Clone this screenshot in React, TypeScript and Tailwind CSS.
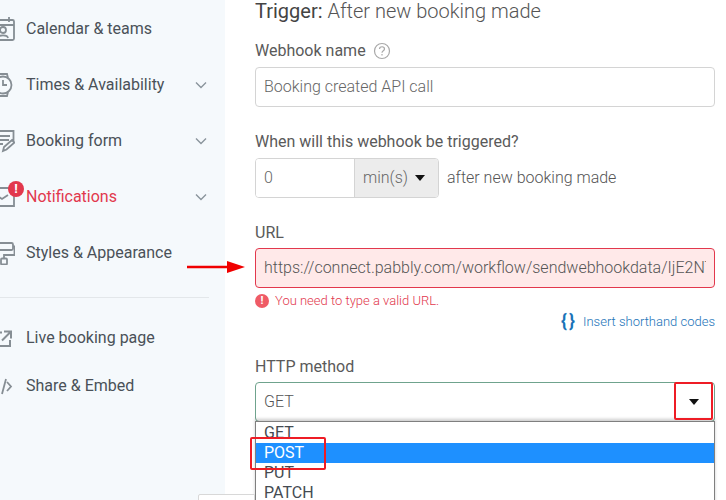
import React from "react";

const Chevron = () => (
  <svg width="12" height="8" viewBox="0 0 12 8" fill="none" stroke="#8a949c" strokeWidth="1.4" className="ml-auto mr-[18px]">
    <path d="M1 1.5l5 5 5-5" />
  </svg>
);

const ico = { width: 24, height: 24, viewBox: "0 0 24 24", fill: "none", stroke: "#868e94", strokeWidth: 1.8 };

const Icons: Record<string, React.ReactNode> = {
  calendar: (
    <svg {...ico}>
      <rect x="1" y="3" width="22" height="20" rx="1.5" />
      <path d="M1 8h22M18 0v5" />
      <circle cx="12" cy="13" r="3" />
      <path d="M7 21c.5-3.500 9.500-3.500 10 0" />
    </svg>
  ),
  watch: (
    <svg {...ico}>
      <circle cx="12" cy="12" r="8.500" />
      <path d="M12 7v5h4M7 5l1-4h8l1 4M7 19l1 4h8l1-4" />
    </svg>
  ),
  form: (
    <svg {...ico}>
      <path d="M4 4V2h18.500v10M8 7h11M5 11h13M4 15h8M4 19h5M12 22l1-4 8-7 2.500 2.500-8 7z" />
    </svg>
  ),
  mail: (
    <svg {...ico}>
      <path d="M1 3h22v18H1zM5 10l6 4 6-4" />
    </svg>
  ),
  roller: (
    <svg {...ico}>
      <rect x="1" y="2" width="21" height="7" rx="1.500" />
      <path d="M22 5.500h1.500V14H13v3.500" />
      <rect x="10" y="17.500" width="6" height="6" rx="1" />
    </svg>
  ),
  link: (
    <svg {...ico} strokeWidth={2}>
      <path d="M11 6.500H4V20h15v-6M13 5.500h7v7M20 5.500L11 14.500" />
    </svg>
  ),
  code: (
    <svg {...ico}>
      <path d="M15 5l-4 15M16 8l4 4.500-4 4.500" />
    </svg>
  ),
};

function NavItem({ icon, label, chevron, h = "h-14", alert }: { icon: string; label: string; chevron?: boolean; h?: string; alert?: boolean }) {
  return (
    <div className={`flex items-center ${h}`}>
      <div className="relative ml-[-9px] w-6 h-6 shrink-0">
        {Icons[icon]}
        {alert && (
          <span className="absolute left-[17px] top-[-4px] w-4 h-4 rounded-full bg-[#e2384d] text-white text-[13px] font-bold leading-4 text-center">!</span>
        )}
      </div>
      <span className={`ml-[11px] text-[16px] ${alert ? "text-[#e2384d]" : "text-[#4a5158]"}`}>{label}</span>
      {chevron && <Chevron />}
    </div>
  );
}

const Field = "w-full h-10 rounded border border-[#d4d4d4] bg-white flex items-center px-[8px] text-[16px] font-light text-[#666]";

export default function App() {
  return (
    <div className="relative w-[726px] h-[500px] overflow-hidden bg-white flex font-['Roboto',sans-serif]">
      <aside className="w-[225px] shrink-0 bg-[#f5f9fc] pt-[1px]">
        <NavItem icon="calendar" label="Calendar & teams" />
        <NavItem icon="watch" label="Times & Availability" chevron />
        <NavItem icon="form" label="Booking form" chevron />
        <NavItem icon="mail" label="Notifications" chevron alert />
        <NavItem icon="roller" label="Styles & Appearance" />
        <div className="w-[209px] border-t border-[#e3e7ea] mt-[16px] mb-[16px]" />
        <NavItem icon="link" label="Live booking page" h="h-12" />
        <NavItem icon="code" label="Share & Embed" h="h-12" />
      </aside>

      <main className="flex-1 pl-[30px] pr-[11px]">
        <h2 className="text-[20px] leading-6 mt-[-1px] font-light text-[#555]">
          <span className="font-normal text-[#444]">Trigger:</span> After new booking made
        </h2>

        <label className="mt-[16px] flex items-center h-6 text-[16px] text-[#5a5a5a]">
          Webhook name
          <svg width="18" height="18" viewBox="0 0 18 18" fill="none" stroke="#a8a8a8" strokeWidth="1.200" className="ml-[7px]">
            <circle cx="9" cy="9" r="7.500" />
            <path d="M6.500 7c0-3 5-3 5 0 0 1.800-2.500 1.800-2.500 3.800M9 12v1.500" />
          </svg>
        </label>
        <div className={`${Field} mt-1`}>Booking created API call</div>

        <label className="mt-[23px] flex items-center h-6 text-[16px] text-[#5a5a5a]">When will this webhook be triggered?</label>
        <div className="mt-1 flex items-center">
          <div className="w-[184px] h-10 rounded border border-[#d4d4d4] flex overflow-hidden text-[16px] font-light text-[#666]">
            <div className="w-[99px] bg-white flex items-center px-[8px] border-r border-[#d4d4d4]">0</div>
            <div className="flex-1 bg-[#ececec] flex items-center pl-[8px]">
              min(s)
              <svg width="10" height="6" viewBox="0 0 10 6" className="ml-[7px]"><path d="M0 0h10L5 6z" fill="#111" /></svg>
            </div>
          </div>
          <span className="ml-[8px] text-[16px] font-light text-[#555]">after new booking made</span>
        </div>

        <label className="mt-[23px] flex items-center h-6 text-[16px] text-[#5a5a5a]">URL</label>
        <div className="mt-[3px] w-full h-10 rounded border border-[#e2384d] bg-[#ffe9e9] flex items-center px-[8px] text-[16px] font-light text-[#555] overflow-hidden whitespace-nowrap">
          <span className="block w-[442px] overflow-hidden">https://connect.pabbly.com/workflow/sendwebhookdata/IjE2NTY1NjA2</span>
        </div>
        <div className="mt-[5px] flex items-center h-4 text-[13px] font-light text-[#e2384d]">
          <span className="w-[14px] h-[14px] rounded-full bg-[#ef5b66] text-white text-[11px] font-bold leading-[14px] text-center">!</span>
          <span className="ml-[6px]">You need to type a valid URL.</span>
        </div>
        <div className="mt-[5px] flex items-center justify-end h-4 text-[13px] font-light text-[#1a73b8]">
          <span className="text-[18px] font-bold leading-4 text-[#1a73b8] mr-[6px] mt-[-2px] tracking-[2px]">{"{}"}</span>
          Insert shorthand codes
        </div>

        <label className="mt-[25px] flex items-center h-6 text-[16px] text-[#5a5a5a]">HTTP method</label>
        <div className="mt-[3px] w-full h-10 rounded border border-[#6fa38d] flex items-center justify-between pl-[8px] pr-[15px] text-[16px] font-light text-[#555] bg-white">
          GET
          <svg width="10" height="6" viewBox="0 0 10 6"><path d="M0 0h10L5 6z" fill="#111" /></svg>
        </div>
        <div className="mt-[-1px] relative w-full border border-[#7f7f7f] text-[16px] leading-5 text-[#444b52] bg-white shadow-[0_-2px_3px_rgba(0,0,0,0.2)]">
          <div className="h-[21px] pl-[8px] pt-[1px]">GET</div>
          <div className="h-5 pl-[8px] bg-[#1e90ff] text-white">POST</div>
          <div className="h-5 pl-[8px]">PUT</div>
          <div className="h-5 pl-[8px]">PATCH</div>
        </div>
      </main>

      {/* annotations laid over the screenshot */}
      <svg width="60" height="14" viewBox="0 0 60 14" className="absolute left-[186px] top-[260px]">
        <path d="M1 7h40" stroke="#f00000" strokeWidth="2.500" />
        <path d="M41 1l18 6-18 6z" fill="#f00000" />
      </svg>
      <div className="absolute left-[674px] top-[382px] w-[39px] h-[38px] border-2 border-[#ee1c25] rounded-[2px]" />
      <div className="absolute left-[250px] top-[437px] w-[76px] h-[33px] border-2 border-[#ee1c25] rounded-[2px]" />
      <div className="absolute left-[198px] top-[494px] w-[57px] h-2 bg-white border border-[#d8d8d8] rounded-tl-[2px]" />
    </div>
  );
}
